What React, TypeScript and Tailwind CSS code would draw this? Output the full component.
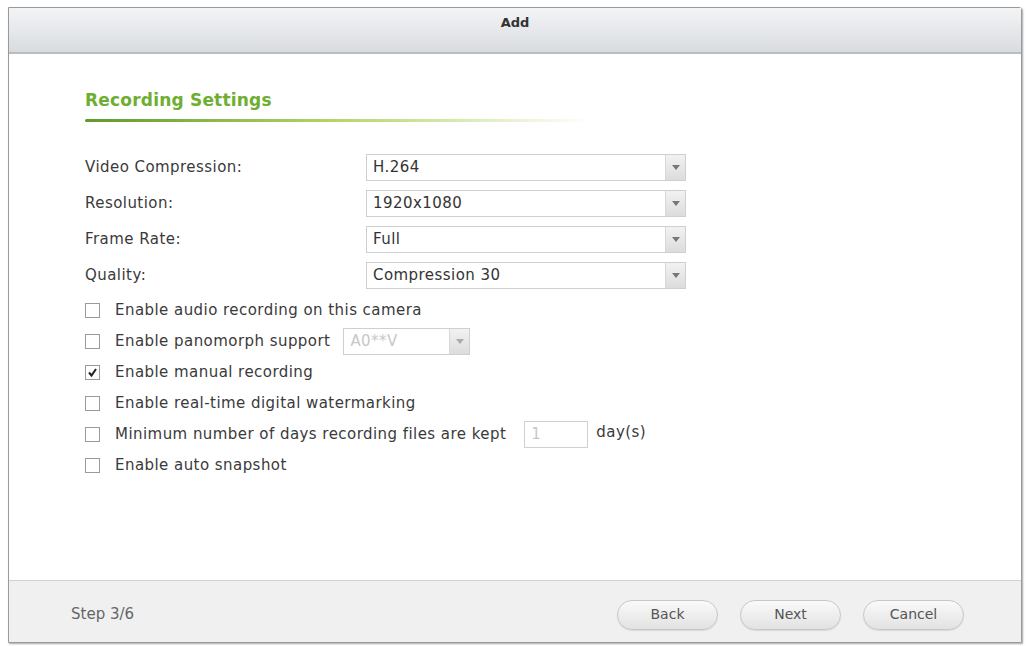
import React from "react";

const font = { fontFamily: '"DejaVu Sans", Verdana, sans-serif' };

function Select({ value, w, disabled }: { value: string; w: string; disabled?: boolean }) {
  return (
    <div className={`flex h-[27px] ${w} border border-[#cfcfcf] bg-white`}>
      <div className={`flex-1 flex items-center pl-[6px] text-[15px] tracking-[0.45px] ${disabled ? "text-[#c8c8c8]" : "text-[#333]"}`}>{value}</div>
      <div className="w-[20px] flex items-center justify-center bg-gradient-to-b from-[#f2f2f2] to-[#dcdcdc] border-l border-[#d8d8d8]">
        <svg width="8" height="5" viewBox="0 0 8 5"><path d="M0 0 L8 0 L4 5 Z" fill={disabled ? "#aaa" : "#777"} /></svg>
      </div>
    </div>
  );
}

function Check({ checked, children }: { checked?: boolean; children: React.ReactNode }) {
  return (
    <div className="flex items-center h-[31px]">
      <div className="w-[15px] h-[15px] border border-[#9a9a9a] bg-white flex items-center justify-center mr-[15px]">
        {checked && (
          <svg width="11" height="11" viewBox="0 0 11 11"><path d="M2 5.5 L4.5 8.5 L9 2" stroke="#222" strokeWidth="2" fill="none" /></svg>
        )}
      </div>
      <div className="flex items-center text-[15px] tracking-[0.45px] text-[#3a3a3a]">{children}</div>
    </div>
  );
}

function Btn({ label }: { label: string }) {
  return (
    <button className="w-[101px] h-[30px] rounded-full border border-[#c8c8c8] bg-gradient-to-b from-[#fafafa] to-[#e2e2e2] text-[14px] text-[#555] shadow-[0_1px_1px_rgba(0,0,0,0.1)]">
      {label}
    </button>
  );
}

export default function App() {
  return (
    <div className="w-[1026px] h-[646px] bg-white pt-[7px] pl-[8px]" style={font}>
      <div className="w-[1014px] h-[636px] border border-[#9a9a9a] flex flex-col shadow-[1px_1px_2px_rgba(0,0,0,0.35)] rounded-tr-[3px]">
        <div className="h-[46px] border-b-2 border-[#b9bcc0] bg-gradient-to-b from-[#f3f4f6] to-[#d9dcdf] flex items-center justify-center">
          <span className="text-[13px] font-bold text-[#333] -mt-[14px]">Add</span>
        </div>
        <div className="flex-1 bg-white pl-[76px] pt-[35px]">
          <div className="text-[17px] font-bold text-[#6eae30] leading-[22px] tracking-[0.2px]">Recording Settings</div>
          <div className="mt-[8px] w-[505px] h-[3px] bg-gradient-to-r from-[#5f9a2b] via-[#b6d56a] to-transparent rounded-full" />
          <div className="mt-[32px] flex flex-col gap-[9px]">
            {[
              ["Video Compression:", "H.264"],
              ["Resolution:", "1920x1080"],
              ["Frame Rate:", "Full"],
              ["Quality:", "Compression 30"],
            ].map(([l, v]) => (
              <div key={l} className="flex items-center">
                <div className="w-[281px] text-[15px] tracking-[0.45px] text-[#3a3a3a]">{l}</div>
                <Select value={v} w="w-[320px]" />
              </div>
            ))}
          </div>
          <div className="mt-[6px] flex flex-col">
            <Check>Enable audio recording on this camera</Check>
            <Check>
              <span>Enable panomorph support</span>
              <span className="ml-[13px]"><Select value="A0**V" w="w-[127px]" disabled /></span>
            </Check>
            <Check checked>Enable manual recording</Check>
            <Check>Enable real-time digital watermarking</Check>
            <Check>
              <span>Minimum number of days recording files are kept</span>
              <span className="ml-[18px] w-[64px] h-[27px] border border-[#d0d0d0] flex items-center pl-[6px] text-[#c8c8c8]">1</span>
              <span className="ml-[8px] -mt-[4px]">day(s)</span>
            </Check>
            <Check>Enable auto snapshot</Check>
          </div>
        </div>
        <div className="h-[62px] border-t border-[#d2d2d2] bg-[#f0f0f0] flex items-center pt-[6px] pl-[62px] pr-[57px]">
          <span className="text-[15px] text-[#666] flex-1">Step 3/6</span>
          <div className="flex gap-[22px]">
            <Btn label="Back" />
            <Btn label="Next" />
            <Btn label="Cancel" />
          </div>
        </div>
      </div>
    </div>
  );
}
